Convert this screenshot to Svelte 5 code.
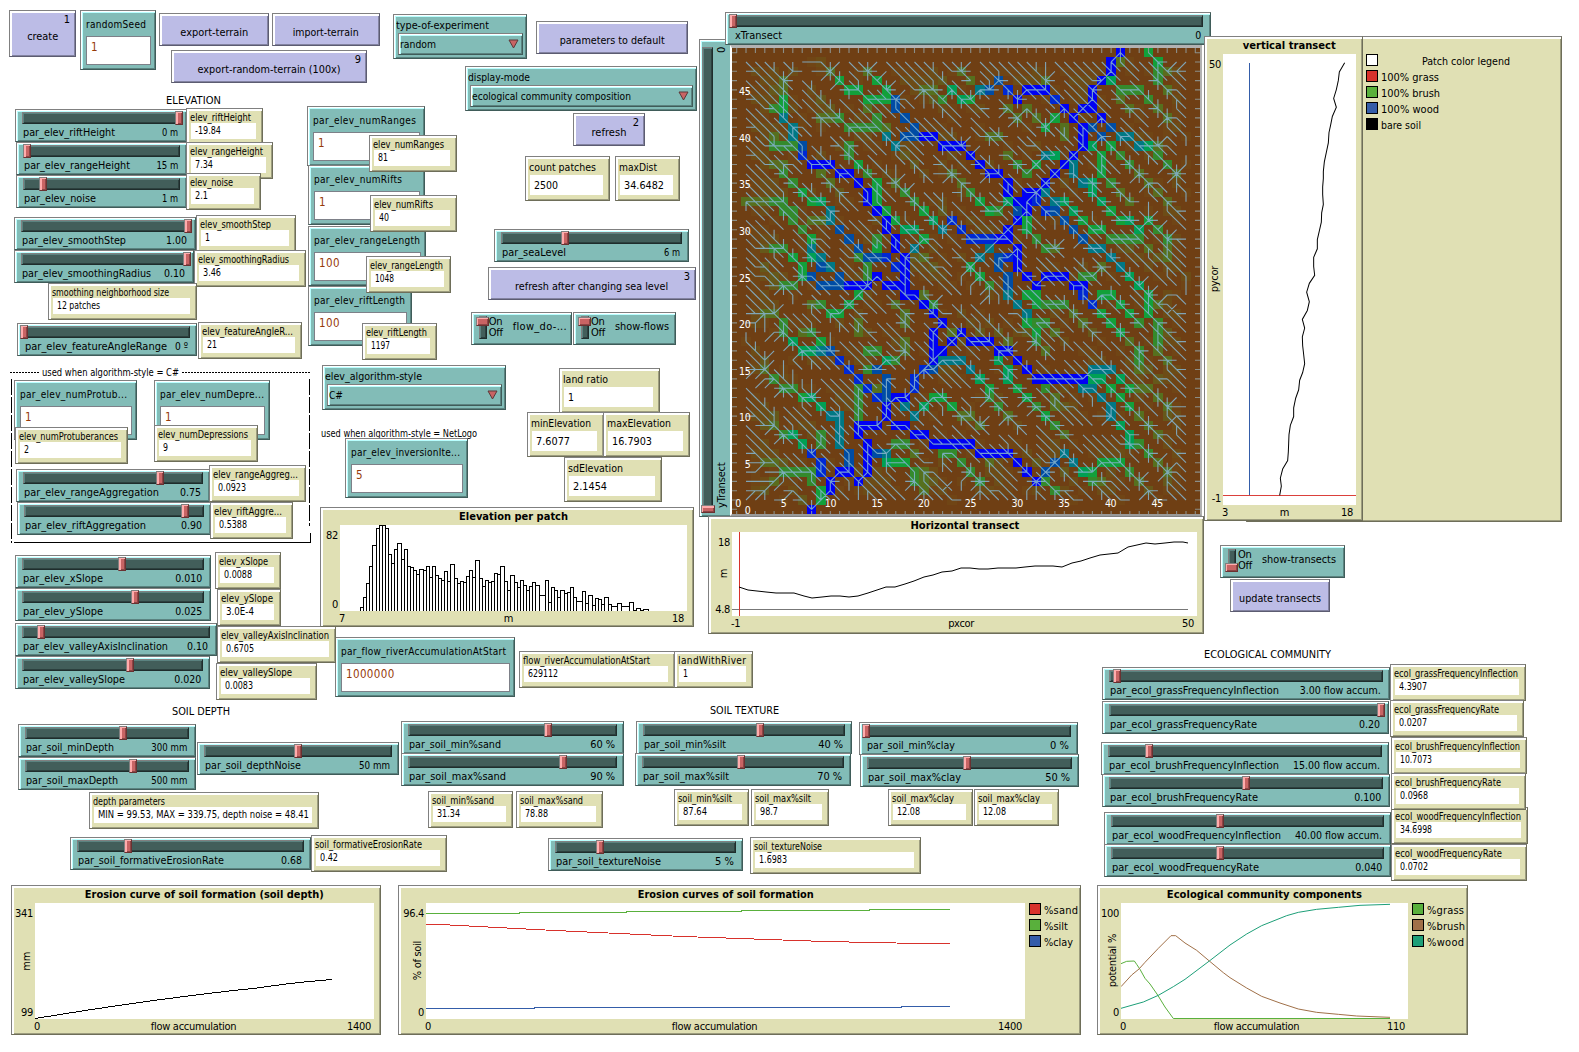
<script>
  // Squeezes or widens a label so that it takes up exactly `width` pixels.
  function fit(node, width) {
    const natural = node.getBoundingClientRect().width;
    if (!natural) return;
    if (!width) {
      node.style.transform = 'scaleX(0.955)';
    } else if (width > natural) {
      node.style.letterSpacing = (width - natural) / Math.max(1, node.textContent.length - 1) + 'px';
    } else {
      node.style.transform = `scaleX(${width / natural})`;
    }
  }

  // [x, y, right, bottom, text, text width, shortcut key]
  const buttons = [
    [9, 10, 76, 57, 'create', 31, '1'],
    [159, 13, 269, 46, 'export-terrain', 68],
    [272, 13, 380, 46, 'import-terrain', 66],
    [171, 50, 367, 83, 'export-random-terrain (100x)', 143, '9'],
    [536, 21, 688, 54, 'parameters to default', 105],
    [573, 113, 645, 146, 'refresh', 35, '2'],
    [488, 267, 696, 300, 'refresh after changing sea level', 153, '3'],
    [1230, 579, 1330, 612, 'update transects', 82]
  ];

  // [x, y, right, label, label width, value]
  const inputs = [
    [80, 10, 156, 'randomSeed', 60, '1'],
    [307, 106, 425, 'par_elev_numRanges', 103, '1'],
    [308, 165, 425, 'par_elev_numRifts', 88, '1'],
    [308, 226, 426, 'par_elev_rangeLength', 106, '100'],
    [308, 286, 412, 'par_elev_riftLength', 91, '100'],
    [14, 380, 137, 'par_elev_numProtub...', 107, '1'],
    [154, 380, 270, 'par_elev_numDepre...', 104, '1'],
    [345, 438, 468, 'par_elev_inversionIte...', 109, '5'],
    [335, 637, 515, 'par_flow_riverAccumulationAtStart', 165, '1000000']
  ];

  // [x, y, right, label, label width, value, value width, knob x]
  const sliders = [
    [15, 109, 187, 'par_elev_riftHeight', 92, '0 m', 16, 175],
    [16, 142, 187, 'par_elev_rangeHeight', 106, '15 m', 22, 23],
    [16, 175, 187, 'par_elev_noise', 72, '1 m', 16, 39],
    [14, 217, 196, 'par_elev_smoothStep', 104, '1.00', 21, 184],
    [14, 250, 194, 'par_elev_smoothingRadius', 129, '0.10', 21, 183],
    [17, 323, 197, 'par_elev_featureAngleRange', 142, '0 º', 13, 20],
    [494, 229, 689, 'par_seaLevel', 64, '6 m', 16, 561],
    [16, 469, 210, 'par_elev_rangeAggregation', 135, '0.75', 21, 156],
    [17, 502, 211, 'par_elev_riftAggregation', 121, '0.90', 21, 181],
    [15, 555, 211, 'par_elev_xSlope', 80, '0.010', 27, 118],
    [15, 588, 211, 'par_elev_ySlope', 80, '0.025', 27, 131],
    [15, 623, 217, 'par_elev_valleyAxisInclination', 145, '0.10', 21, 37],
    [15, 656, 210, 'par_elev_valleySlope', 102, '0.020', 27, 126],
    [18, 724, 196, 'par_soil_minDepth', 88, '300 mm', 36, 119],
    [18, 757, 196, 'par_soil_maxDepth', 92, '500 mm', 36, 129],
    [197, 742, 399, 'par_soil_depthNoise', 96, '50 mm', 31, 294],
    [401, 721, 624, 'par_soil_min%sand', 92, '60 %', 25, 544],
    [401, 753, 624, 'par_soil_max%sand', 97, '90 %', 25, 559],
    [636, 721, 852, 'par_soil_min%silt', 82, '40 %', 25, 756],
    [635, 753, 851, 'par_soil_max%silt', 86, '70 %', 25, 737],
    [859, 722, 1078, 'par_soil_min%clay', 88, '0 %', 19, 862],
    [860, 754, 1079, 'par_soil_max%clay', 93, '50 %', 25, 963],
    [70, 837, 311, 'par_soil_formativeErosionRate', 146, '0.68', 21, 124],
    [548, 838, 743, 'par_soil_textureNoise', 105, '5 %', 19, 596],
    [1102, 667, 1390, 'par_ecol_grassFrequencyInflection', 169, '3.00 flow accum.', 81, 1113],
    [1102, 701, 1389, 'par_ecol_grassFrequencyRate', 147, '0.20', 21, 1377],
    [1101, 742, 1389, 'par_ecol_brushFrequencyInflection', 170, '15.00 flow accum.', 87, 1145],
    [1102, 774, 1390, 'par_ecol_brushFrequencyRate', 148, '0.100', 27, 1242],
    [1104, 812, 1391, 'par_ecol_woodFrequencyInflection', 169, '40.00 flow accum.', 87, 1216],
    [1104, 844, 1391, 'par_ecol_woodFrequencyRate', 147, '0.040', 27, 1216]
  ];

  // [x, y, right, label, label width, value, value width]
  const monitors = [
    [186, 108, 263, 'elev_riftHeight', 61, '-19.84', 26],
    [186, 142, 273, 'elev_rangeHeight', 73, '7.34', 18],
    [186, 173, 261, 'elev_noise', 43, '2.1', 13],
    [196, 215, 296, 'elev_smoothStep', 71, '1', 5],
    [194, 250, 306, 'elev_smoothingRadius', 91, '3.46', 18],
    [48, 283, 197, 'smoothing neighborhood size', 117, '12 patches', 43],
    [198, 322, 302, 'elev_featureAngleR...', 91, '21', 10],
    [369, 135, 457, 'elev_numRanges', 71, '81', 10],
    [370, 195, 457, 'elev_numRifts', 59, '40', 10],
    [366, 256, 451, 'elev_rangeLength', 73, '1048', 19],
    [362, 323, 437, 'elev_riftLength', 61, '1197', 19],
    [15, 427, 128, 'elev_numProtuberances', 99, '2', 5],
    [154, 425, 258, 'elev_numDepressions', 90, '9', 5],
    [209, 465, 306, 'elev_rangeAggreg...', 85, '0.0923', 28],
    [210, 502, 293, 'elev_riftAggre...', 68, '0.5388', 28],
    [215, 552, 281, 'elev_xSlope', 49, '0.0088', 28],
    [217, 589, 281, 'elev_ySlope', 52, '3.0E-4', 28],
    [217, 626, 336, 'elev_valleyAxisInclination', 108, '0.6705', 28],
    [216, 663, 317, 'elev_valleySlope', 72, '0.0083', 28],
    [519, 651, 675, 'flow_riverAccumulationAtStart', 127, '629112', 30],
    [674, 651, 753, 'landWithRiver', 68, '1', 5],
    [89, 792, 319, 'depth parameters', 72, 'MIN = 99.53, MAX = 339.75, depth noise = 48.41', 211],
    [428, 791, 513, 'soil_min%sand', 62, '31.34', 23],
    [516, 791, 603, 'soil_max%sand', 63, '78.88', 23],
    [674, 789, 749, 'soil_min%silt', 54, '87.64', 24],
    [751, 789, 829, 'soil_max%silt', 56, '98.7', 18],
    [888, 789, 973, 'soil_max%clay', 62, '12.08', 23],
    [974, 789, 1059, 'soil_max%clay', 62, '12.08', 23],
    [311, 835, 447, 'soil_formativeErosionRate', 107, '0.42', 18],
    [750, 837, 921, 'soil_textureNoise', 68, '1.6983', 28],
    [1390, 664, 1526, 'ecol_grassFrequencyInflection', 124, '4.3907', 28],
    [1390, 700, 1524, 'ecol_grassFrequencyRate', 105, '0.0207', 28],
    [1391, 737, 1527, 'ecol_brushFrequencyInflection', 125, '10.7073', 32],
    [1391, 807, 1528, 'ecol_woodFrequencyInflection', 126, '34.6998', 32],
    [1391, 773, 1526, 'ecol_brushFrequencyRate', 106, '0.0968', 28],
    [1391, 844, 1527, 'ecol_woodFrequencyRate', 107, '0.0702', 28]
  ];
  const bigMonitors = [
    [525, 156, 610, 'count patches', 67, '2500', 24],
    [615, 156, 680, 'maxDist', 38, '34.6482', 40],
    [559, 368, 660, 'land ratio', 45, '1', 6],
    [527, 412, 604, 'minElevation', 60, '7.6077', 34],
    [603, 412, 690, 'maxElevation', 64, '16.7903', 40],
    [564, 457, 662, 'sdElevation', 55, '2.1454', 34]
  ];

  const choosers = [
    [393, 14, 527, 'type-of-experiment', 93, 'random', 36],
    [465, 66, 697, 'display-mode', 62, 'ecological community composition', 159],
    [322, 365, 506, 'elev_algorithm-style', 97, 'C#', 14]
  ];
  const switches = [
    [471, 312, 572, 'flow_do-...', 54, true],
    [573, 312, 676, 'show-flows', 54, true],
    [1220, 545, 1345, 'show-transects', 74, false]
  ];
  const notes = [
    [166, 93, 'ELEVATION', 55, ''],
    [172, 704, 'SOIL DEPTH', 58, ''],
    [710, 703, 'SOIL TEXTURE', 69, ''],
    [1204, 647, 'ECOLOGICAL COMMUNITY', 127, ''],
    [42, 365, 'used when algorithm-style = C#', 137, 'small'],
    [321, 426, 'used when algorithm-style = NetLogo', 156, 'small']
  ];

  // Histogram bars: left edge and top, in thirds of a pixel.
  const hist = '149,772 158,742 167,700 176,649 185,586 197,533 206,526 215,526 224,535 233,613 242,640 251,598 262,580 273,628 281,598 291,649 300,652 309,661 318,673 328,658 338,661 347,649 356,682 365,649 375,676 384,685 394,691 403,664 412,694 421,643 431,685 440,700 451,694 460,697 469,679 478,661 487,682 496,631 506,685 517,709 526,691 535,697 544,694 553,670 562,673 571,649 583,694 592,721 601,676 611,697 620,712 629,691 638,706 649,721 658,709 667,697 676,706 686,736 704,691 715,757 724,712 733,721 742,742 751,721 761,730 770,727 781,712 790,742 799,754 816,724 826,760 835,736 847,766 856,745 865,748 874,763 883,742 893,763 902,769 922,760 932,769 957,757 970,781 979,775 990,781 999,778 1015,783'
    .split(' ').map((p) => p.split(',').map(Number));
  const histPath = hist.slice(0, -1)
    .map(([x, y], i) => `M${x + 1.5},786V${y + 1.5}H${hist[i + 1][0] + 1.5}V786`).join('');

  const plots = [
    {
      x: 320, y: 507, r: 694, b: 627, px: 340, py: 525, pr: 687, pb: 611,
      title: 'Elevation per patch', tw: 109, yr: ['82', '0'], xr: ['7', '18'], xn: 'm', yn: '',
      box: '90 525 1041 258', lines: [{ d: histPath, c: '#000', w: 3 }], legend: []
    },
    {
      x: 708, y: 516, r: 1204, b: 634, px: 732, py: 532, pr: 1197, pb: 616,
      title: 'Horizontal transect', tw: 109, yr: ['18', '4.8'], xr: ['-1', '50'], xn: 'pxcor', yn: 'm',
      box: '732 532 465 84', legend: [],
      lines: [
        { d: 'M732,609.5H1188', c: '#777', w: 1 },
        { d: 'M739.5,532V616', c: '#d8322c', w: 1 },
        { d: 'M739,587L748,590 757,591 766,592 776,593 785,593 794,593 804,596 812,598 822,597 831,596 840,596 849,597 858,596 868,593 877,590 886,587 895,587 905,584 914,581 924,577 933,575 942,572 952,571 961,568 970,568 979,569 988,569 998,568 1007,568 1016,568 1025,567 1035,566 1044,566 1053,566 1062,567 1072,563 1081,561 1090,558 1100,555 1109,554 1118,553 1128,547 1137,545 1146,543 1155,544 1165,543 1174,542 1183,542 1188,543', c: '#000', w: 1, soft: true }
      ]
    },
    {
      x: 1246, y: 36, r: 1562, b: 522, px: 1362, py: 54, pr: 1362, pb: 504,
      title: '', tw: 0, yr: ['', ''], xr: ['', ''], xn: '', yn: '', box: '0 0 1 1', lines: [],
      legend: [['#fff', 'Patch color legend', 88], ['#d8322c', '100% grass', 58], ['#59b03c', '100% brush', 59], ['#345da9', '100% wood', 58], ['#000', 'bare soil', 40]]
    },
    {
      x: 1204, y: 36, r: 1363, b: 521, px: 1223, py: 54, pr: 1356, pb: 505,
      title: 'vertical transect', tw: 93, yr: ['50', '-1'], xr: ['3', '18'], xn: 'm', yn: 'pycor',
      box: '69 63 399 1178', legend: [],
      lines: [
        { d: 'M148.5,86V1216', c: '#345da9', w: 3 },
        { d: 'M69,1216.5H468', c: '#d8322c', w: 2.6 },
        { d: 'M434,86L418,110 415,132 409,156 401,179 409,202 397,226 392,248 387,268 385,295 379,320 373,345 370,370 370,388 368,410 368,430 370,456 365,478 364,502 358,525 352,548 352,572 341,594 341,618 344,641 328,662 320,685 328,710 322,733 307,756 314,779 307,802 308,825 311,848 314,872 308,895 299,915 296,940 287,962 281,987 281,1010 271,1033 267,1057 266,1080 265,1102 263,1125 248,1147 241,1171 244,1192 239,1216', c: '#000', w: 3, soft: true }
      ]
    },
    {
      x: 11, y: 885, r: 381, b: 1035, px: 35, py: 903, pr: 374, pb: 1019,
      title: 'Erosion curve of soil formation (soil depth)', tw: 239, yr: ['341', '99'], xr: ['0', '1400'], xn: 'flow accumulation', yn: 'mm',
      box: '35 903 339 116', legend: [],
      lines: [{ d: 'M35,1018.5L57,1015 88,1010 122,1005 157,1000 196,995 229,991 257,988 286,984 304,982 332,979.5', c: '#000', w: 1 }]
    },
    {
      x: 398, y: 885, r: 1081, b: 1035, px: 426, py: 903, pr: 1025, pb: 1019,
      title: 'Erosion curves of soil formation', tw: 176, yr: ['96.4', '0'], xr: ['0', '1400'], xn: 'flow accumulation', yn: '% of soil',
      box: '426 903 599 116',
      lines: [
        { d: 'M426,924.5L440,924.5 555,930.5 683,936.5 825,941.5 920,943.5H950', c: '#d8322c', w: 1 },
        { d: 'M426,913.5H519V912.5H626V911.5H741V910.5H869V909.5H950', c: '#59b03c', w: 1 },
        { d: 'M426,1008.5H534V1007.5H901V1006.5H950', c: '#345da9', w: 1 }
      ],
      legend: [['#d8322c', '%sand', 34], ['#59b03c', '%silt', 24], ['#345da9', '%clay', 29]]
    },
    {
      x: 1097, y: 885, r: 1468, b: 1035, px: 1121, py: 903, pr: 1408, pb: 1019,
      title: 'Ecological community components', tw: 195, yr: ['100', '0'], xr: ['0', '110'], xn: 'flow accumulation', yn: 'potential %',
      box: '93 804 861 348',
      lines: [
        { d: 'M93,986L110,979 133,978 140,988 150,1003 165,1030 180,1047 203,1080 225,1116 250,1150.500 900,1150.500', c: '#59b03c', w: 3, soft: true },
        { d: 'M93,1055L125,1020 147,1002 165,982 205,940 243,902 257,902 285,924 320,946 358,978 400,1013 420,1028 470,1059 515,1084 570,1104 625,1122 680,1132 745,1138 800,1143 900,1147', c: '#a07048', w: 3, soft: true },
        { d: 'M93,1120L135,1108 160,1101 205,1081 250,1055 285,1033 358,978 420,930 470,897 515,872 590,842 625,832 680,823 745,817 810,811 900,808', c: '#1d9f78', w: 3, soft: true }
      ],
      legend: [['#59b03c', '%grass', 37], ['#a07048', '%brush', 38], ['#1d9f78', '%wood', 37]]
    }
  ];

  // ---- world view: 50 x 50 patches, drained by the streams below ----
  const N = 50, CW = 9.36, CH = 9.32;
  const tints = { B: '#0000f4', C: '#0028d4', R: '#004ca4', T: '#007884', E: '#00a054', G: '#12a03a', O: '#348a2c', F: '#56701e' };
  // "column.rowTint" cells, rows counted from the top, listed along each stream.
  const streams = [
    '5.3F 5.4F 5.5G 5.6G 5.7T 6.8T 6.9T 7.10R 7.11C 8.12B 9.12B 10.12B 11.13B 12.13B 13.14B 14.15B 14.16B 15.17B 16.18B 16.19B 17.20B 17.21B 18.22B 18.23B 18.24B 18.25B 18.26B 19.26B 20.27B 21.28B 22.29B 21.30B 21.31B 21.32B 21.33B 20.34C 19.35C 19.36C 18.37B 17.37B 16.38B 16.39B 15.40B 14.40B 13.40B 13.41B 14.42B 14.43B 14.44B 14.45B 13.46B 12.45B 11.45B 10.46B 10.47B 9.48G 8.49B',
    '4.6O 5.7T', '4.9F 4.10O 5.10O 6.10O 7.11C',
    '10.2F 11.3G 12.4G 13.4G 14.5G 15.5G 16.5G 17.5R 17.6R 18.7R 19.8R 20.9B', '14.2F 15.3G 16.4G 17.5R',
    '9.7F 10.7F 11.7O 12.8O 13.8O 14.8O 15.8O 16.9T 17.10T 18.9R 19.9R 20.9B 21.9B 22.10B 23.10B 24.10B 25.11B 26.12B 27.13B 28.13B 29.14B 29.15B 30.16B 31.17B', '14.6F 15.7O 16.8F',
    '41.0B 40.1B 40.2B 39.3B 38.4B 38.5B 37.6B 36.7B 37.8B 37.9B 37.10B 36.11B 35.12B 34.13B 33.14B 32.15B 31.16B 31.17B 30.18B 29.19B 28.20B 29.20B 30.21B 30.22B 30.23B 31.24B 32.25B 33.24B 34.24B 35.24B 36.25B 37.25B 37.26C 38.27C 39.28G 40.29G 41.30G 42.31F 43.32O 43.33O 43.34F',
    '38.6B 39.7B 38.8R 39.9R 38.10E', '31.15B 32.15B 32.16C 33.17C 34.17R 35.18R 36.19R 37.20R 38.21T 39.21T 40.22T 41.23T 42.24E 43.25E 44.26G 44.27G 44.28G 45.29O 45.30O 45.31O 45.32F 46.33F',
    '39.7B 40.8R 41.9T 42.9T 43.10T 44.10E 45.11O 46.12O 47.13F', '45.10F 44.10E', '38.10E 39.11G 39.12G 39.13G 40.14O 41.15F 42.16F', '39.9R 40.10G 41.11O 42.12O 43.13F 44.14F',
    '40.3E 41.4O 42.4O 43.4O 44.5O 45.6F 46.7F', '41.5F 42.6F', '44.0G 45.1G 45.2O 45.3O 46.4F', '41.1F 41.0B',
    '31.4B 32.4B 33.4B 34.5C 35.6B 36.7B', '20.4F 21.4F 22.5O 23.4E 24.5E 25.5G 26.4T 27.4R 28.3R 29.4C 30.5B 31.4B', '33.3F 33.4B',
    '31.6F 30.7F 29.6F', '35.6B 34.7G 33.8G 32.7F 31.6F', '35.8F 35.9F', '28.9F 27.9F', '33.15T 34.16T 35.16E 36.17E 37.18G 38.19G 39.19G 40.20O 41.20O 42.20O 43.20O 44.21F',
    '36.12T 36.13T 37.14T 38.14E 38.15E 39.16E 40.17G 41.18G 42.18E 43.19E 44.18G 45.19O 46.20O 46.21F 46.22F', '34.11E 33.11T 32.12G 31.13O 30.12O 29.11F',
    '30.17R 29.16E 28.17O 27.17G 26.16G 25.15O 24.14F 23.13F', '31.17B 31.18G 31.19G 32.20O 33.21O 34.21F',
    '28.20B 27.20C 26.20C 25.20C 24.19C 23.18C 22.19T 21.18E 20.17G 19.16O 18.15O 17.14F',
    '30.21B 29.22C 28.22R 28.23R 29.24R 29.25R 29.26T 30.27T 31.28T 31.29G 32.30G 32.31O 33.32F', '28.20B 27.21T 26.22T 25.23G 26.24G 27.25O', '32.26G 33.27O 34.27O 35.27O 36.28F 37.29F', '32.29O 33.29O 34.30F', '31.26G 32.27G',
    '37.24O 38.24O 39.23F', '38.27C 39.26G 40.26G 41.27G 42.28G 43.29O', '22.29B 23.30F', '21.33B 22.32B 23.31B 24.30B 25.31B 26.31B 27.31B 28.32B 29.32B 30.33B 31.34B 32.35B 33.35B 34.35B 35.35B 36.35B 37.35B 38.34T 39.34T 40.34T 41.35E 42.36G 43.36F',
    '36.35B 37.36T 38.36T 39.37T 40.38T 40.39T 41.40E 42.41E 42.42E 43.42O 44.43O 45.44F 46.45F', '38.35E 39.35E 40.36G 41.37G 42.38G 43.39F 44.40F', '44.36F 45.37F 46.38F',
    '20.34C 21.34R 22.33T 23.33T 24.33T 25.34T 26.35E 27.36G 27.37O 28.38O 29.39F', '28.32B 28.33E 29.34E 29.35E 30.36G 31.37G 32.38O 33.39G 34.40O 35.41F', '33.36O 34.37F 34.38F',
    '16.39B 17.40B 18.40B 19.41B 20.41B 21.42B 22.42B 23.42B 24.42B 25.42B 26.43B 27.43B 28.43B 29.43B 30.44B 31.45B 32.46B 33.45R 34.44R 35.43T 36.44T 37.45E 38.45G 39.44G 40.44G 41.44G 42.45O 43.46F', '32.46B 33.46O 34.47O', '38.46O 39.46F', '22.43O 23.43O 24.44O 25.45O 26.46O', '24.39F 25.39F 26.40F',
    '16.35R 16.36R 16.37R 16.38B', '15.36F 15.34R 16.33E 17.33O 18.32F 18.31F', '14.32O 15.32O 16.33E', '14.34O 15.34R',
    '17.37B 18.38T 19.39T 20.38E 21.37G 22.37G 23.38G 24.39O', '19.26B 18.26B', '21.28B 21.27O 20.26F',
    '1.16F 2.16F 3.16F 4.16O 5.17O 6.18O 7.19O 8.20G 8.21T 9.22T 10.23T 11.24R 12.25B 13.25B 14.25B 15.24B 16.25B 17.25B 18.26B', '4.16O 5.16O 6.17O', '9.25R 10.25R 11.25R 12.25B', '4.21O 5.21O 6.22G 7.23G 7.24G 8.24R 9.25R', '5.25O 6.25O 7.24G',
    '5.12F 5.13O 6.14O 7.15G 8.16G 9.16E 10.17T 10.18T 11.19R 12.20R 13.21R 14.22R 15.22R 16.22C 17.23C 18.24B', '8.18F 9.18F 10.18T',
    '12.10O 12.11O 13.12G 14.13O 15.14G 15.15G 15.16G 16.17G 17.18G 18.19E 19.19E 20.20G 19.21T 18.22B', '15.20O 15.21G', '13.22O 14.23O 14.24O 14.25B', '10.23T 9.23R 8.22E',
    '3.28F 4.28F 5.29O 5.30O 6.31E 7.32E 8.32E 9.32T 10.32R 11.33C 12.34C 13.35C 14.36C 15.37C 16.38B', '7.30F 8.30O 9.31G 10.32R', '14.25B 13.26G 12.27G 11.28G 10.28G 9.27O 8.27F',
    '3.34F 4.35O 5.36O 6.36O 7.37G 8.37E 9.38E 10.39T 11.39T 11.40T 11.41T 11.42T 12.43R 12.44R 12.45B', '13.36O 13.37O 13.38O 13.39O 13.40B',
    '4.40F 5.41O 6.41E 7.42E 8.43C 9.44C 9.45C 10.46B', '9.41O 9.42O 8.43C', '5.45O 6.45O 7.45O 8.45O 8.46O 9.47G 9.48G',
    '14.42B 15.43R 16.43T 16.44E 17.44G 18.44G 19.45O 19.46O 20.47F', '16.43T 17.42O 18.42O 19.43F', '20.45F 20.46F', '17.27F 18.28F 18.29F', '9.13F 10.14F', '13.29F 13.30F', '24.2F 25.3F'
  ];
  const key = (c, t) => t * N + c;
  const fill = new Array(N * N).fill('');
  const dist = new Array(N * N).fill(Infinity);
  const down = new Array(N * N).fill(-1);
  const links = [];
  for (const s of streams) {
    let prev = null;
    for (const cell of s.split(' ')) {
      const m = cell.match(/(\d+)\.(\d+)(\w)/);
      const c = +m[1], t = +m[2];
      const k = key(c, t);
      if (!fill[k]) fill[k] = tints[m[3]];
      dist[k] = 0;
      if (prev && Math.abs(prev[0] - c) < 2 && Math.abs(prev[1] - t) < 2) links.push([prev[0], prev[1], c, t]);
      prev = [c, t];
    }
  }
  const noise = (a, b) => {
    const v = Math.sin(a * 127.1 + b * 311.7) * 43758.5453;
    return v - Math.floor(v);
  };
  let moved = true;
  while (moved) {
    moved = false;
    for (let t = 1; t < N - 1; t++) for (let c = 1; c < N - 1; c++) {
      const k = key(c, t);
      if (dist[k] === 0) continue;
      for (let dy = -1; dy < 2; dy++) for (let dx = -1; dx < 2; dx++) {
        if (!dx && !dy) continue;
        const n = key(c + dx, t + dy);
        const step = dx * dy > 0 ? 0.8 : dx * dy < 0 ? 3.4 : 1.9;
        const d = dist[n] + step + noise(c * 9 + dx, t * 7 + dy) * 0.6;
        if (d < dist[k] - 1e-9) { dist[k] = d; down[k] = n; moved = true; }
      }
    }
  }
  const acc = new Array(N * N).fill(1);
  const order = [...dist.keys()].filter((k) => down[k] >= 0).sort((a, b) => dist[b] - dist[a]);
  for (const k of order) acc[down[k]] += acc[k];
  for (const k of order) {
    links.push([k % N, Math.floor(k / N), down[k] % N, Math.floor(down[k] / N)]);
    if (acc[k] > 7) fill[k] = '#5a6c1e';
    else if (acc[k] > 4) fill[k] = '#66581a';
    else if (acc[k] > 2) fill[k] = '#6d4c16';
    else if (acc[k] > 1) fill[k] = '#704515';
  }
  const patches = fill.map((f, k) => [k % N, Math.floor(k / N), f]).filter((p) => p[2]);
  const cx = (c) => ((c + 0.5) * CW).toFixed(1);
  const cy = (t) => ((t + 0.5) * CH).toFixed(1);
  const linkPath = links.map(([a, b, c, d]) => `M${cx(a)},${cy(b)}L${cx(c)},${cy(d)}`).join('');
  let ticks = '';
  for (let i = 0; i < N; i++) {
    ticks += `M${cx(i)},0V5M${cx(i)},463V466M0,${cy(i)}H5M463,${cy(i)}H468`;
  }
  const marks = [0, 5, 10, 15, 20, 25, 30, 35, 40, 45];
</script>

{#snippet txt(s, w)}<span class="t" use:fit={w}>{s}</span>{/snippet}

{#snippet monitor(m, big)}
  <div class="w mon" class:big style:left="{m[0]}px" style:top="{m[1]}px" style:width="{m[2] - m[0]}px">
    <div class="mlabel">{@render txt(m[3], m[4])}</div>
    <div class="mvalue">{@render txt(m[5], m[6])}</div>
  </div>
{/snippet}

<main>
  {#each notes as n}
    <div class="note {n[4]}" style:left="{n[0]}px" style:top="{n[1]}px">{@render txt(n[2], n[3])}</div>
  {/each}
  <svg class="frame" viewBox="0 0 302 175" width="302" height="175">
    <path d="M0,6.500H29M172,6.500H300" stroke-dasharray="2 1" />
    <path d="M1.500,13V177" stroke-dasharray="16 2" />
    <path d="M299.500,13V160" stroke-dasharray="16 2" />
    <path d="M300.500,167V177M4,176.500H300" />
  </svg>

  {#each buttons as b}
    <div class="w button" style:left="{b[0]}px" style:top="{b[1]}px" style:width="{b[2] - b[0]}px" style:height="{b[3] - b[1]}px">
      {@render txt(b[4], b[5])}
      {#if b[6]}<span class="key">{b[6]}</span>{/if}
    </div>
  {/each}

  {#each inputs as n}
    <div class="w teal input" style:left="{n[0]}px" style:top="{n[1]}px" style:width="{n[2] - n[0]}px">
      <div class="ilabel">{@render txt(n[3], n[4])}</div>
      <div class="ivalue">{@render txt(n[5], n[5].length * 6.9)}</div>
    </div>
  {/each}

  {#each sliders as s}
    <div class="w teal slider" style:left="{s[0]}px" style:top="{s[1]}px" style:width="{s[2] - s[0]}px">
      <div class="track"><i class="knob" style:left="{s[7] - s[0] - 8}px"></i></div>
      <div class="srow">
        {@render txt(s[3], s[4])}
        <span class="right">{@render txt(s[5], s[6])}</span>
      </div>
    </div>
  {/each}

  {#each choosers as c}
    <div class="w teal chooser" style:left="{c[0]}px" style:top="{c[1]}px" style:width="{c[2] - c[0]}px">
      <div class="clabel">{@render txt(c[3], c[4])}</div>
      <div class="teal cbox">
        {@render txt(c[5], c[6])}
        <svg width="11" height="10" viewBox="0 0 11 10"><path d="M1,1H10L5.500,9Z" fill="#c86464" stroke="#5a3838" /></svg>
      </div>
    </div>
  {/each}

  {#each switches as s}
    <div class="w teal switch" style:left="{s[0]}px" style:top="{s[1]}px" style:width="{s[2] - s[0]}px">
      <div class="slot"><i class="lever" class:off={!s[5]}></i></div>
      <div class="onoff"><span>On</span><span>Off</span></div>
      <div class="slabel">{@render txt(s[3], s[4])}</div>
    </div>
  {/each}

  <div class="w teal ytr">
    <div class="vtrack"><i class="vknob"></i></div>
    <div class="vtext"><span>yTransect</span><span>0</span></div>
  </div>

  <div class="world">
    <svg width="468" height="466" viewBox="0 0 468 466">
      {#each patches as p}
        <rect x={p[0] * CW} y={p[1] * CH} width={CW} height={CH} fill={p[2]} shape-rendering="crispEdges" />
      {/each}
      <path class="flow dim" d={ticks} />
      <path class="flow" d={linkPath} />
      {#each marks as m}
        <text x={(m ? 5 : 6) + m * 9.34} y="459" text-anchor="middle">{m}</text>
        <text x="18.500" y={(m ? 466.500 : 465.500) - m * 9.32} text-anchor="end">{m}</text>
      {/each}
    </svg>
  </div>

  <div class="w teal xtr">
    <div class="track"><i class="knob"></i></div>
    <div class="srow">{@render txt('xTransect', 47)}<span class="right">{@render txt('0', 6)}</span></div>
  </div>

  {#each plots as p}
    <div
      class="w plot"
      style:left="{p.x}px"
      style:top="{p.y}px"
      style:width="{p.r - p.x}px"
      style:height="{p.b - p.y}px"
      style:grid-template-columns="{p.px - p.x - 1}px {p.pr - p.px}px 1fr"
      style:grid-template-rows="{p.py - p.y - 1}px {p.pb - p.py}px 1fr"
    >
      <div class="title">{@render txt(p.title, p.tw)}</div>
      <div class="yaxis"><span>{p.yr[0]}</span><span>{p.yr[1]}</span></div>
      <div class="yname">{p.yn}</div>
      <svg class="area" viewBox={p.box} preserveAspectRatio="none">
        {#each p.lines as l}
          <path d={l.d} stroke={l.c} fill="none" stroke-width={l.w} shape-rendering={l.soft ? 'auto' : 'crispEdges'} />
        {/each}
      </svg>
      <div class="legend">
        {#each p.legend as g}
          <div class="item"><i style:background={g[0]}></i><span class:mid={g[0] === '#fff'}>{@render txt(g[1], g[2])}</span></div>
        {/each}
      </div>
      <div class="xaxis"><span>{p.xr[0]}</span><span>{p.xn}</span><span>{p.xr[1]}</span></div>
    </div>
  {/each}

  {#each monitors as m}{@render monitor(m, false)}{/each}
  {#each bigMonitors as m}{@render monitor(m, true)}{/each}
</main>

<style>
  :global(body) { background: #fff; }
  main {
    position: relative;
    width: 1579px;
    height: 1052px;
    overflow: hidden;
    background: #fff;
    color: #000;
    font: 11px/13px 'DejaVu Sans Condensed', 'DejaVu Sans', sans-serif;
    white-space: nowrap;
  }
  .t { display: inline-block; padding-top: 1px; vertical-align: top; transform-origin: 0 50%; }
  .w, .note, .frame, .world { position: absolute; box-sizing: border-box; }
  .w {
    border: 1px solid #808080;
  }
  .button {
    display: flex;
    align-items: center;
    justify-content: center;
    padding-top: 5px;
    background: #bcbce6;
    border-color: #808080 #5c5c71 #5c5c71 #808080;
    box-shadow: inset 2px 2px #fff, inset -1px -1px #8383a1;
  }
  .button .t { transform-origin: 50% 50%; }
  .key { position: absolute; right: 5px; top: 2px; }
  .teal {
    background: #82bcb7;
    border-color: #808080 #3f5c59 #3f5c59 #808080;
    box-shadow: inset 1px 1px #fff, inset 2px 2px #b9ffff, inset -1px -1px #5b8380;
  }
  .input { height: 60px; padding: 6px 4px 4px 5px; }
  .ilabel { height: 19px; font-size: 10px; padding-left: 0; }
  .ivalue { height: 23px; border: 1px solid #7d8088; background: #fff; color: #963a0a; font-size: 11.5px; padding: 3px 3px 1px 4px; }
  .slider { height: 33px; padding: 2px 6px 0; }
  .track {
    position: relative;
    height: 12px;
    box-sizing: border-box;
    background: #425e5a;
    border: 1px solid;
    border-color: #808080 #1f2d2c #1f2d2c #808080;
    box-shadow: inset 1px 1px #5b8380, inset -1px -1px #2c403e;
  }
  .knob {
    position: absolute;
    top: -2px;
    width: 8px;
    height: 14px;
    box-sizing: border-box;
    background: #c86464;
    border: 1px solid;
    border-color: #808080 #6a3131 #6a3131 #808080;
    box-shadow: inset 2px 1px #ffacac, inset -1px -1px #8c4646;
  }
  .srow { display: flex; justify-content: space-between; padding: 1px 2px 0 1px; }
  .right .t { transform-origin: 100% 50%; }
  .mon, .plot {
    background: #e0e0b4;
    border-color: #808080 #6e6e59 #6e6e59 #808080;
    box-shadow: inset 2px 2px #fff, inset -1px -1px #9d9d7f;
  }
  .mon { height: 37px; padding: 1px 6px 0 4px; font-size: 10px; }
  .mlabel { height: 13px; margin-left: -1px; }
  .mvalue { height: 16px; line-height: 14px; background: #fff; padding-left: 4px; }
  .big { height: 45px; padding-top: 3px; font-size: 11px; }
  .big .mlabel { height: 15px; }
  .big .mvalue { height: 20px; line-height: 20px; }
  .chooser { height: 45px; padding: 3px 3px 0 4px; }
  .clabel { height: 15px; margin-left: -2px; }
  .cbox { display: flex; justify-content: space-between; align-items: center; height: 22px; box-sizing: border-box; padding: 0 3px 1px 1px; border: 1px solid; border-color: #808080 #3f5c59 #3f5c59 #808080; }
  .switch { height: 33px; display: flex; padding: 3px 4px 0; }
  .slot { position: relative; width: 8px; height: 23px; margin-left: 3px; box-sizing: border-box; background: #425e5a; border: 1px solid; border-color: #808080 #1f2d2c #1f2d2c #808080; box-shadow: inset 1px 1px #5b8380, inset -1px -1px #2c403e; }
  .lever { position: absolute; left: -4px; top: 0; width: 13px; height: 9px; box-sizing: border-box; background: #c86464; border: 1px solid; border-color: #808080 #6a3131 #6a3131 #808080; box-shadow: inset 1px 1px #ffacac, inset -1px -1px #8c4646; }
  .lever.off { top: 13px; }
  .onoff { display: flex; flex-direction: column; line-height: 11px; margin-left: 2px; letter-spacing: -0.3px; }
  .slabel { margin-left: 10px; padding-top: 3px; }
  .note.small { font-size: 10px; }
  .frame { left: 10px; top: 366px; fill: none; stroke: #000; overflow: visible; }
  .xtr { left: 725px; top: 12px; width: 486px; height: 33px; padding: 2px 7px 0 3px; z-index: 1; }
  .xtr .knob { left: -1px; }
  .xtr .srow { padding-left: 6px; }
  .ytr { left: 699px; top: 39px; width: 33px; height: 478px; display: flex; padding: 7px 0 3px 2px; }
  .vtrack { position: relative; width: 11px; background: #425e5a; border: 1px solid; border-color: #808080 #1f2d2c #1f2d2c #808080; box-sizing: border-box; box-shadow: inset 1px 1px #5b8380, inset -1px -1px #2c403e; }
  .vknob { position: absolute; left: -2px; bottom: -1px; width: 14px; height: 8px; box-sizing: border-box; background: #c86464; border: 1px solid; border-color: #808080 #6a3131 #6a3131 #808080; box-shadow: inset 1px 2px #ffacac, inset -1px -1px #8c4646; }
  .vtext { display: flex; justify-content: space-between; writing-mode: vertical-rl; transform: rotate(180deg); margin-left: 2px; padding: 5px 0 0; letter-spacing: -0.2px; }
  .world { left: 730px; top: 45px; width: 472px; height: 471px; border: 2px solid #b2b2b2; border-left-color: #fff; border-bottom-color: #999; border-top-width: 3px; background: #fff; }
  .world svg { display: block; background: #6f3f14; }
  .flow { fill: none; stroke: #83b2cc; stroke-width: 1.1; opacity: 0.88; }
  .dim { stroke: #909a98; }
  .world text { fill: #fff; font-size: 10.5px; letter-spacing: -0.3px; }
  .plot { display: grid; z-index: 1; }
  .title { grid-area: 1 / 2; display: flex; justify-content: center; font: bold 11px/16px 'DejaVu Sans', sans-serif; }
  .title .t { transform-origin: 50% 50%; }
  .yaxis { grid-area: 2 / 1; display: flex; flex-direction: column; justify-content: space-between; align-items: flex-end; padding: 4px 2px 0 0; letter-spacing: -0.3px; }
  .yname { grid-area: 2 / 1; align-self: center; justify-self: end; margin-right: 2px; writing-mode: vertical-rl; transform: rotate(180deg); letter-spacing: -0.3px; }
  .area { grid-area: 2 / 2; width: 100%; height: 100%; background: #fff; }
  .legend { grid-area: 2 / 3; padding-left: 3px; }
  .item { display: flex; height: 16px; }
  .item i { width: 12px; height: 12px; box-sizing: border-box; border: 1px solid #000; margin-right: 3px; margin-left: 1px; }
  .mid { margin-left: 41px; }
  .xaxis { grid-area: 3 / 2; display: flex; justify-content: space-between; letter-spacing: -0.3px; padding: 1px 3px 0 0; margin-left: -1px; }
</style>
